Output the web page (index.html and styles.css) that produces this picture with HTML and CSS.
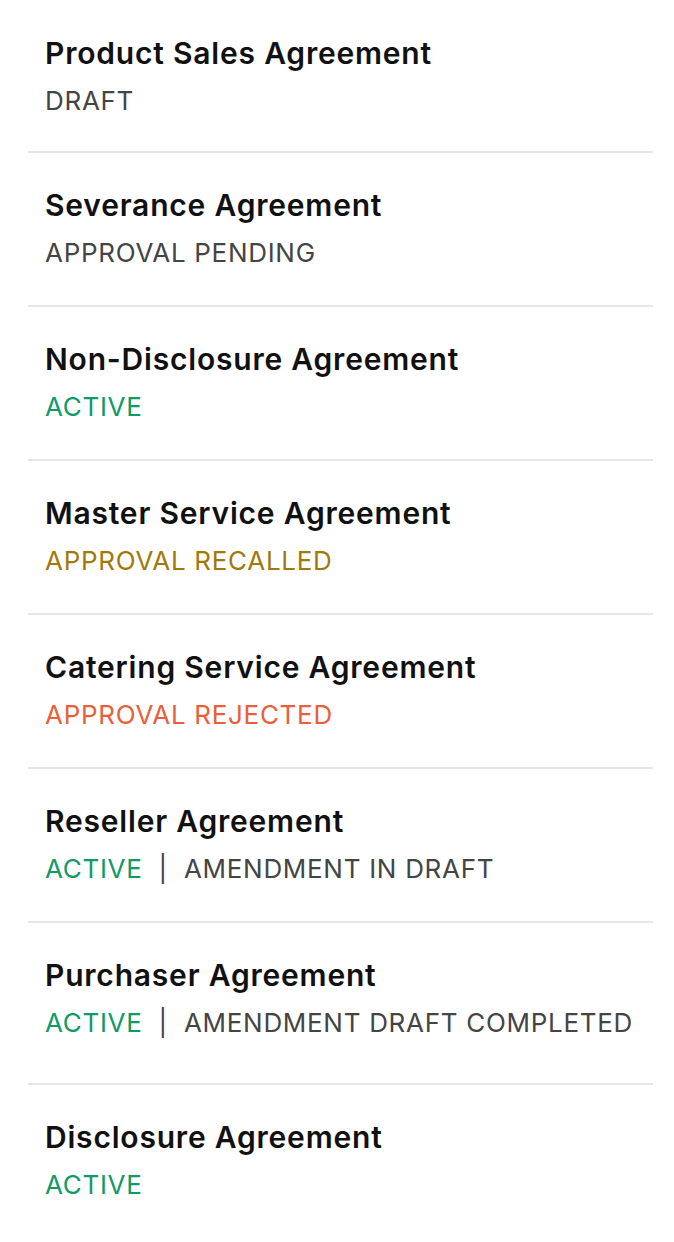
FILE: index.html
```html
<!DOCTYPE html>
<html lang="en">
<head>
    <meta charset="UTF-8">
    <meta name="viewport" content="width=device-width, initial-scale=1.0">
    <title>Agreements</title>
    <link rel="stylesheet" href="styles.css">
</head>
<body>
    <ul class="agreement-list">
        <li class="agreement">
            <div class="agreement-title">Product Sales Agreement</div>
            <div class="agreement-status"><span class="status-draft">DRAFT</span></div>
        </li>
        <li class="agreement">
            <div class="agreement-title">Severance Agreement</div>
            <div class="agreement-status"><span class="status-draft">APPROVAL PENDING</span></div>
        </li>
        <li class="agreement">
            <div class="agreement-title">Non-Disclosure Agreement</div>
            <div class="agreement-status"><span class="status-active">ACTIVE</span></div>
        </li>
        <li class="agreement">
            <div class="agreement-title">Master Service Agreement</div>
            <div class="agreement-status"><span class="status-recalled">APPROVAL RECALLED</span></div>
        </li>
        <li class="agreement">
            <div class="agreement-title">Catering Service Agreement</div>
            <div class="agreement-status"><span class="status-rejected">APPROVAL REJECTED</span></div>
        </li>
        <li class="agreement">
            <div class="agreement-title">Reseller Agreement</div>
            <div class="agreement-status"><span class="status-active">ACTIVE</span><span class="sep">|</span><span class="status-draft">AMENDMENT IN DRAFT</span></div>
        </li>
        <li class="agreement agreement-tall">
            <div class="agreement-title">Purchaser Agreement</div>
            <div class="agreement-status"><span class="status-active">ACTIVE</span><span class="sep">|</span><span class="status-draft">AMENDMENT DRAFT COMPLETED</span></div>
        </li>
        <li class="agreement">
            <div class="agreement-title">Disclosure Agreement</div>
            <div class="agreement-status"><span class="status-active">ACTIVE</span></div>
        </li>
    </ul>
</body>
</html>
```

FILE: styles.css
```css
:root {
    --title-color: #111;
    --muted-color: #444;
    --green-color: #0f9a66;
    --gold-color: #a07a08;
    --red-color: #e95f3c;
    --divider-color: #e6e6e6;
}

body {
    margin: 0;
    background-color: #fff;
    font-family: Inter, "Noto Sans", sans-serif;
}

.agreement-list {
    list-style: none;
    margin: 0 21px 0 28px;
    padding: 0;
}

.agreement {
    padding: 29px 0 29px 17px;
    border-bottom: 2px solid var(--divider-color);
}
.agreement:first-child {
    padding-top: 30px;
    padding-bottom: 27px;
}
.agreement:last-child {
    border-bottom: none;
}
.agreement-tall {
    padding-bottom: 37px;
}

.agreement-title {
    font-size: 30px;
    font-weight: 600;
    letter-spacing: 0.8px;
    line-height: 47px;
    color: var(--title-color);
}

.agreement-status {
    font-size: 26px;
    letter-spacing: 0.7px;
    line-height: 47px;
    color: var(--muted-color);
}

.sep {
    margin: 0 16px;
}

.status-draft {
    color: var(--muted-color);
}
.status-active {
    color: var(--green-color);
}
.status-recalled {
    color: var(--gold-color);
}
.status-rejected {
    color: var(--red-color);
}
```
